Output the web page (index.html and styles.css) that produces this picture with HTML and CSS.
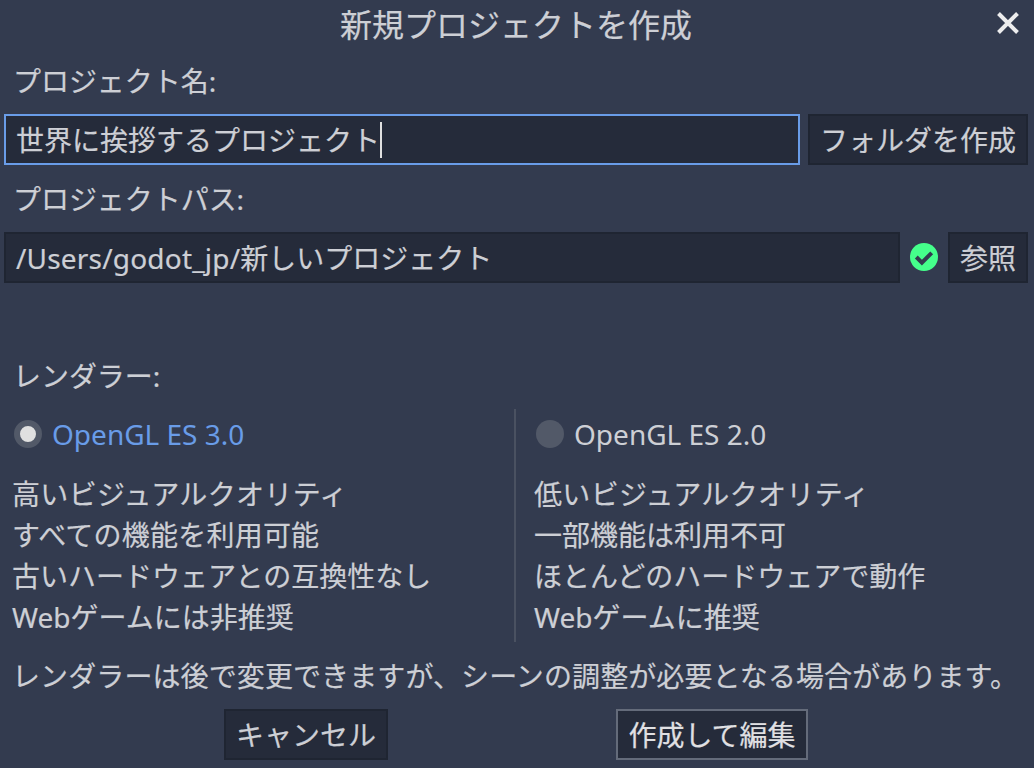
FILE: index.html
```html
<!DOCTYPE html>
<html lang="ja">
<head>
<meta charset="utf-8">
<title>新規プロジェクトを作成</title>
<link rel="stylesheet" href="styles.css">
</head>
<body>
<main class="dialog">
  <header class="titlebar">
    <h1 class="title"><span>新規プロジェクトを作成</span></h1>
    <svg class="close" viewBox="0 0 24 24"><path d="M2.5 2.5 21.5 21.5M21.5 2.5 2.5 21.5"/></svg>
  </header>
  <div class="label name-label"><span>プロジェクト名:</span></div>
  <div class="row">
    <div class="field focused"><span>世界に挨拶するプロジェクト</span><i class="caret"></i></div>
    <div class="button folder"><span>フォルダを作成</span></div>
  </div>
  <div class="label path-label"><span>プロジェクトパス:</span></div>
  <div class="row">
    <div class="field"><span><span class="latin">/Users/godot_jp/</span>新しいプロジェクト</span></div>
    <svg class="status" viewBox="0 0 28 28"><circle cx="14" cy="14" r="14"/><path d="m6.3 14 5.6 5.6L21.7 9.8"/></svg>
    <div class="button browse"><span>参照</span></div>
  </div>
  <div class="label renderer-label"><span>レンダラー:</span></div>
  <section class="renderers">
    <div class="renderer">
      <div class="option selected"><i class="radio"></i><span>OpenGL ES 3.0</span></div>
      <p class="quality"><span>高いビジュアルクオリティ</span></p>
      <p class="features"><span>すべての機能を利用可能</span></p>
      <p><span>古いハードウェアとの互換性なし</span></p>
      <p><span>Webゲームには非推奨</span></p>
    </div>
    <div class="renderer second">
      <div class="option"><i class="radio"></i><span>OpenGL ES 2.0</span></div>
      <p class="quality"><span>低いビジュアルクオリティ</span></p>
      <p><span>一部機能は利用不可</span></p>
      <p><span>ほとんどのハードウェアで動作</span></p>
      <p><span>Webゲームに推奨</span></p>
    </div>
  </section>
  <div class="note"><span>レンダラーは後で変更できますが、シーンの調整が必要となる場合があります。</span></div>
  <footer class="actions">
    <div class="button cancel"><span>キャンセル</span></div>
    <div class="button create"><span>作成して編集</span></div>
  </footer>
</main>
</body>
</html>
```
FILE: styles.css
```css
* { box-sizing: border-box; }
body {
  margin: 0;
  background: #333b4f;
  color: #cdcfd5;
  font: 28px/40px "Noto Sans", "Noto Sans CJK JP", sans-serif;
  white-space: nowrap;
  -webkit-text-stroke: 0.2px currentColor;
}
.dialog { width: 1034px; height: 768px; overflow: hidden; }
.titlebar { position: relative; height: 50px; }
.title { margin: 0; font-size: 32px; font-weight: 400; line-height: 50px; text-align: center; padding-right: 2px; }
.close { position: absolute; top: 11px; right: 14px; width: 24px; height: 24px; fill: none; stroke: #ededee; stroke-width: 4; }
.label { padding-left: 13px; height: 64px; line-height: 62px; letter-spacing: -0.05px; }
.path-label { height: 67px; line-height: 68px; }
.row { display: flex; align-items: center; padding: 0 6px 0 4px; }
.field, .button { height: 51px; line-height: 48px; border: 2px solid #1f2532; background: #252b3a; }
.field { flex: 1; display: flex; align-items: center; padding-left: 10px; }
.focused { border-color: #699ce8; }
.caret { width: 2px; height: 36px; background: #e0e0e0; }
.latin { letter-spacing: 0.19px; }
.button { text-align: center; }
.folder { width: 220px; margin-left: 8px; }
.status { width: 28px; height: 28px; margin: 0 10px 2px; fill: #45ff8b; }
.status path { fill: none; stroke: #333b4f; stroke-width: 4; }
.browse { width: 80px; }
.renderer-label { height: 126px; padding-top: 62px; line-height: 62px; }
.renderers { display: grid; grid-template-columns: 514px 1fr; height: 233px; }
.renderer { padding-left: 12px; }
.second { border-left: 2px solid #4a5161; padding-left: 18px; }
.option { display: flex; align-items: center; height: 50px; margin-bottom: 15px; padding-left: 2px; gap: 10px; -webkit-text-stroke: 0; }
.radio { width: 28px; height: 28px; border-radius: 50%; background: #525968; }
.selected { color: #699ce8; }
.selected .radio { border: 6px solid #525968; background: #e0e0e0; }
.renderer p { margin: 0; height: 41px; line-height: 41px; }
.renderer .quality { letter-spacing: 0.35px; }
.renderer .features { letter-spacing: 0.22px; }
.note { height: 67px; padding-left: 12px; line-height: 68px; letter-spacing: 0.1px; }
.actions { display: flex; padding-left: 224px; }
.cancel { width: 164px; }
.create { width: 192px; margin-left: 228px; border-color: #646b7a; color: #e0e0e3; }
```
